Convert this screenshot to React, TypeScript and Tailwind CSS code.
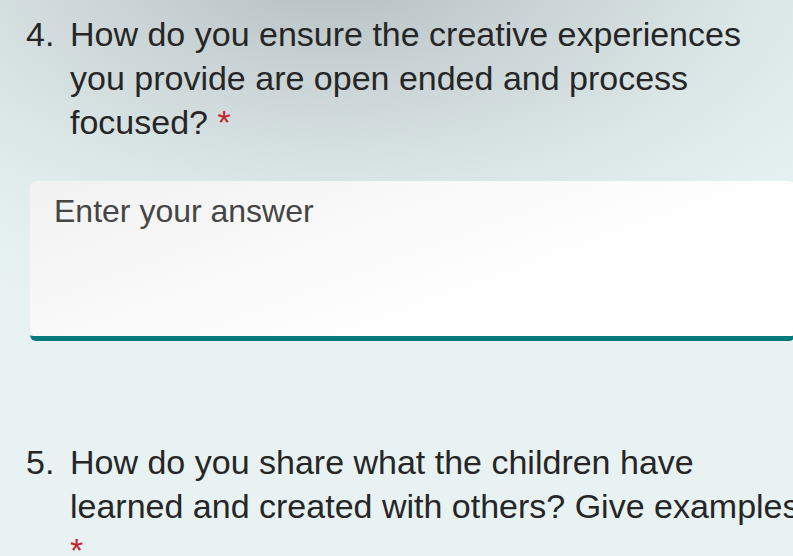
import React from "react";

export default function App() {
  return (
    <div className="w-[793px] h-[556px] overflow-hidden relative bg-[radial-gradient(ellipse_90%_70%_at_42%_-8%,#b2bcbe_0%,#c9d3d5_30%,#dbe6e7_60%,#e5f0f1_85%,#e8f2f3_100%)] font-['Liberation_Sans',Arial,sans-serif] text-[#262626]">
      <div className="w-[830px] pt-[12px]">
        <div className="flex pl-[26px]">
          <div className="w-[44px] shrink-0 text-[34px] leading-[44px]">4.</div>
          <div className="w-[720px] text-[34px] leading-[44px]">
            How do you ensure the creative experiences you provide are open ended and process focused? <span className="text-[#c4262e]">*</span>
          </div>
        </div>

        <div className="ml-[30px] mt-[37px] w-[765px] h-[160px] rounded-[6px] border-b-[5px] border-[#077a7b] bg-[linear-gradient(160deg,#f1f1f1_0%,#fafafa_40%,#ffffff_70%)] pl-[24px] pt-[12px]">
          <div className="text-[32px] leading-[37px] text-[#454545]">Enter your answer</div>
        </div>

        <div className="flex pl-[26px] mt-[99px]">
          <div className="w-[44px] shrink-0 text-[34px] leading-[44px]">5.</div>
          <div className="w-[735px] text-[34px] leading-[44px]">
            How do you share what the children have learned and created with others? Give examples <span className="text-[#c4262e]">*</span>
          </div>
        </div>
      </div>
    </div>
  );
}
